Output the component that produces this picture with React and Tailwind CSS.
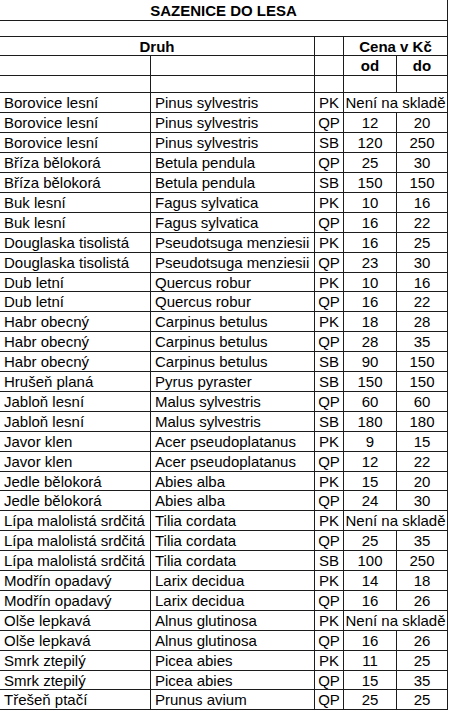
import React from 'react';

const rows = [
  ['Borovice lesní', 'Pinus sylvestris', 'PK', null, null],
  ['Borovice lesní', 'Pinus sylvestris', 'QP', '12', '20'],
  ['Borovice lesní', 'Pinus sylvestris', 'SB', '120', '250'],
  ['Bříza bělokorá', 'Betula pendula', 'QP', '25', '30'],
  ['Bříza bělokorá', 'Betula pendula', 'SB', '150', '150'],
  ['Buk lesní', 'Fagus sylvatica', 'PK', '10', '16'],
  ['Buk lesní', 'Fagus sylvatica', 'QP', '16', '22'],
  ['Douglaska tisolistá', 'Pseudotsuga menziesii', 'PK', '16', '25'],
  ['Douglaska tisolistá', 'Pseudotsuga menziesii', 'QP', '23', '30'],
  ['Dub letní', 'Quercus robur', 'PK', '10', '16'],
  ['Dub letní', 'Quercus robur', 'QP', '16', '22'],
  ['Habr obecný', 'Carpinus betulus', 'PK', '18', '28'],
  ['Habr obecný', 'Carpinus betulus', 'QP', '28', '35'],
  ['Habr obecný', 'Carpinus betulus', 'SB', '90', '150'],
  ['Hrušeň planá', 'Pyrus pyraster', 'SB', '150', '150'],
  ['Jabloň lesní', 'Malus sylvestris', 'QP', '60', '60'],
  ['Jabloň lesní', 'Malus sylvestris', 'SB', '180', '180'],
  ['Javor klen', 'Acer pseudoplatanus', 'PK', '9', '15'],
  ['Javor klen', 'Acer pseudoplatanus', 'QP', '12', '22'],
  ['Jedle bělokorá', 'Abies alba', 'PK', '15', '20'],
  ['Jedle bělokorá', 'Abies alba', 'QP', '24', '30'],
  ['Lípa malolistá srdčitá', 'Tilia cordata', 'PK', null, null],
  ['Lípa malolistá srdčitá', 'Tilia cordata', 'QP', '25', '35'],
  ['Lípa malolistá srdčitá', 'Tilia cordata', 'SB', '100', '250'],
  ['Modřín opadavý', 'Larix decidua', 'PK', '14', '18'],
  ['Modřín opadavý', 'Larix decidua', 'QP', '16', '26'],
  ['Olše lepkavá', 'Alnus glutinosa', 'PK', null, null],
  ['Olše lepkavá', 'Alnus glutinosa', 'QP', '16', '26'],
  ['Smrk ztepilý', 'Picea abies', 'PK', '11', '25'],
  ['Smrk ztepilý', 'Picea abies', 'QP', '15', '35'],
  ['Třešeň ptačí', 'Prunus avium', 'QP', '25', '25'],
];

const cell = 'flex items-center border-r border-[#1c1c1c] whitespace-nowrap';

function EmptyRow({ h }) {
  return (
    <div className={`flex border-b border-[#1c1c1c] ${h}`}>
      <div className={`${cell} w-[151px]`} />
      <div className={`${cell} w-[164px]`} />
      <div className={`${cell} w-[29px]`} />
      <div className={`${cell} w-[53px]`} />
      <div className={`${cell} w-[51px]`} />
    </div>
  );
}

export default function App() {
  return (
    <div className="w-[450px] h-[711px] bg-white text-black overflow-hidden font-['Liberation_Sans',Arial,sans-serif] text-[15px] leading-none">
      <div className="w-[448px]">
        {/* title */}
        <div className="flex items-center justify-center h-[21px] border-b border-r border-[#1c1c1c] font-bold">
          SAZENICE DO LESA
        </div>
        <div className="h-4 border-b border-r border-[#1c1c1c]" />

        {/* header */}
        <div className="flex h-[19px] border-b border-[#1c1c1c] font-bold">
          <div className={`${cell} w-[315px] justify-center`}>Druh</div>
          <div className={`${cell} w-[29px]`} />
          <div className={`${cell} w-[104px] justify-center`}>Cena v Kč</div>
        </div>
        <div className="flex h-5 border-b border-[#1c1c1c] font-bold">
          <div className={`${cell} w-[151px]`} />
          <div className={`${cell} w-[164px]`} />
          <div className={`${cell} w-[29px]`} />
          <div className={`${cell} w-[53px] justify-center`}>od</div>
          <div className={`${cell} w-[51px] justify-center`}>do</div>
        </div>
        <EmptyRow h="h-[17px]" />

        {/* data */}
        {rows.map((r, i) => (
          <div
            key={i}
            className={`flex border-b border-[#1c1c1c] ${i % 10 === 9 ? 'h-[19px]' : 'h-5'}`}
          >
            <div className={`${cell} w-[151px] pl-1`}>{r[0]}</div>
            <div className={`${cell} w-[164px] pl-[4px]`}>{r[1]}</div>
            <div className={`${cell} w-[29px] justify-center`}>{r[2]}</div>
            {r[3] === null ? (
              <div className={`${cell} w-[104px] justify-center`}>Není na skladě</div>
            ) : (
              <>
                <div className={`${cell} w-[53px] justify-center`}>{r[3]}</div>
                <div className={`${cell} w-[51px] justify-center`}>{r[4]}</div>
              </>
            )}
          </div>
        ))}
      </div>
    </div>
  );
}
